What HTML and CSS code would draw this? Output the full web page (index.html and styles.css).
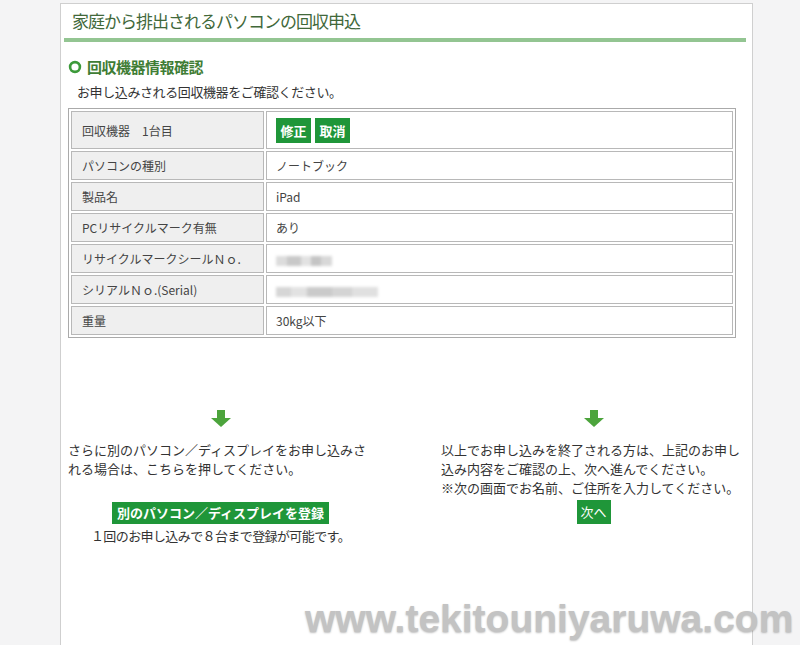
FILE: index.html
```html
<!DOCTYPE html>
<html lang="ja">
<head>
<meta charset="utf-8">
<title>家庭から排出されるパソコンの回収申込</title>
<link rel="stylesheet" href="styles.css">
</head>
<body>
<div class="panel">
  <header class="page-head">
    <h1 class="page-title">家庭から排出されるパソコンの回収申込</h1>
  </header>
  <div class="content">
    <h2 class="section-title">
      <svg class="ring" width="14" height="14" viewBox="0 0 14 14"><circle cx="7" cy="7" r="4.9" fill="none" stroke="#3c9a3a" stroke-width="2.6"/></svg>
      <span>回収機器情報確認</span>
    </h2>
    <p class="lead">お申し込みされる回収機器をご確認ください。</p>
    <table class="info">
      <tr class="first">
        <th>回収機器　1台目</th>
        <td><span class="btn small">修正</span><span class="btn small">取消</span></td>
      </tr>
      <tr><th>パソコンの種別</th><td>ノートブック</td></tr>
      <tr><th>製品名</th><td>iPad</td></tr>
      <tr><th>PCリサイクルマーク有無</th><td>あり</td></tr>
      <tr><th>リサイクルマークシールＮｏ.</th><td><span class="blur b1"></span></td></tr>
      <tr><th>シリアルＮｏ.(Serial)</th><td><span class="blur b2"></span></td></tr>
      <tr><th>重量</th><td>30kg以下</td></tr>
    </table>

    <div class="choices">
      <div class="choice">
        <svg class="arrow" width="20" height="17" viewBox="0 0 20 17"><rect x="6" y="0" width="8" height="8.5" fill="#4ca43c"/><polygon points="0,8 20,8 10,17" fill="#4ca43c"/></svg>
        <p class="msg">さらに別のパソコン／ディスプレイをお申し込みされる場合は、こちらを押してください。</p>
        <span class="btn wide">別のパソコン／ディスプレイを登録</span>
        <p class="note">１回のお申し込みで８台まで登録が可能です。</p>
      </div>
      <div class="choice">
        <svg class="arrow" width="20" height="17" viewBox="0 0 20 17"><rect x="6" y="0" width="8" height="8.5" fill="#4ca43c"/><polygon points="0,8 20,8 10,17" fill="#4ca43c"/></svg>
        <p class="msg">以上でお申し込みを終了される方は、上記のお申し込み内容をご確認の上、次へ進んでください。<br>※次の画面でお名前、ご住所を入力してください。</p>
        <span class="btn next">次へ</span>
      </div>
    </div>
  </div>
</div>
<div class="watermark">www.tekitouniyaruwa.com</div>
</body>
</html>
```

FILE: styles.css
```css
html, body {
  margin: 0;
  padding: 0;
  height: 100%;
  overflow: hidden;
}
body {
  background: #f4f4f5;
  font-family: "Noto Sans CJK JP", "Noto Sans", sans-serif;
  color: #333;
  position: relative;
}
.panel {
  box-sizing: border-box;
  margin: 3px 0 0 60px;
  width: 693px;
  height: calc(100% - 3px);
  background: #fff;
  border: 1px solid #cfcfcf;
  border-bottom: none;
}
.page-head {
  margin: 0 6px 0 3px;
  padding: 5px 0 5px 8px;
  border-bottom: 4px solid #93c592;
}
.page-title {
  margin: 0;
  font-size: 17px;
  line-height: 24px;
  font-weight: 400;
  letter-spacing: -1px;
  color: #41683a;
}
.content {
  padding: 0 16px 0 7px;
}
.section-title {
  display: flex;
  align-items: center;
  gap: 5px;
  margin: 15px 0 0;
  font-size: 15px;
  line-height: 20px;
  font-weight: 700;
  color: #3f7d35;
  letter-spacing: -0.5px;
}
.ring {
  display: block;
}
.lead {
  margin: 6px 0 0 9px;
  font-size: 13px;
  line-height: 18px;
  letter-spacing: -0.4px;
  color: #333;
}
.info {
  margin-top: 7px;
  width: 668px;
  border: 1px solid #aaa;
  border-spacing: 2px;
  border-collapse: separate;
  table-layout: fixed;
  font-size: 12px;
  color: #444;
}
.info th, .info td {
  box-sizing: border-box;
  height: 29px;
  padding: 0 10px;
  border: 1px solid #b8b8b8;
  text-align: left;
  font-weight: 400;
  vertical-align: middle;
  white-space: nowrap;
}
.info th {
  width: 193px;
  background: #efefef;
}
.info td {
  background: #fff;
  padding-left: 9px;
}
.info tr.first th, .info tr.first td {
  height: 38px;
}
.btn {
  display: inline-block;
  background: #1f9639;
  color: #fff;
  font-weight: 700;
  font-size: 13px;
  text-align: center;
}
.btn.small {
  width: 35px;
  height: 25px;
  line-height: 25px;
  margin-right: 4px;
  vertical-align: middle;
}
.blur {
  display: inline-block;
  height: 10px;
  vertical-align: middle;
  filter: blur(1.6px);
}
.b1 {
  width: 56px;
  background: linear-gradient(90deg, #dcdcdc 0 20%, #c8c8c8 20% 45%, #e2e2e2 45% 62%, #c4c4c4 62% 80%, #d8d8d8 80%);
}
.b2 {
  width: 102px;
  background: linear-gradient(90deg, #d6d6d6 0 15%, #e2e2e2 15% 30%, #cacaca 30% 55%, #d4d4d4 55% 75%, #e0e0e0 75%);
}
.choices {
  display: grid;
  grid-template-columns: 305px 305px;
  column-gap: 68px;
  margin-top: 72px;
  align-items: start;
}
.choice {
  display: flex;
  flex-direction: column;
  align-items: center;
}
.arrow {
  display: block;
}
.msg {
  margin: 13px 0 0;
  align-self: stretch;
  font-size: 13px;
  line-height: 19px;
  color: #333;
}
.btn.wide {
  margin-top: 24px;
  padding: 0 5px;
  height: 22px;
  line-height: 22px;
}
.note {
  margin: 2px 0 0;
  font-size: 13px;
  line-height: 19px;
  letter-spacing: -0.6px;
  color: #333;
}
.btn.next {
  margin-top: 3px;
  width: 34px;
  height: 24px;
  line-height: 24px;
  font-weight: 400;
}
.watermark {
  position: absolute;
  left: 305px;
  top: 599px;
  font-family: "Liberation Sans", Arial, sans-serif;
  font-weight: 700;
  font-size: 39px;
  line-height: 1;
  color: #c3c3c3;
  text-shadow: 0 1px 2px rgba(0, 0, 0, 0.25);
  white-space: nowrap;
}
```
